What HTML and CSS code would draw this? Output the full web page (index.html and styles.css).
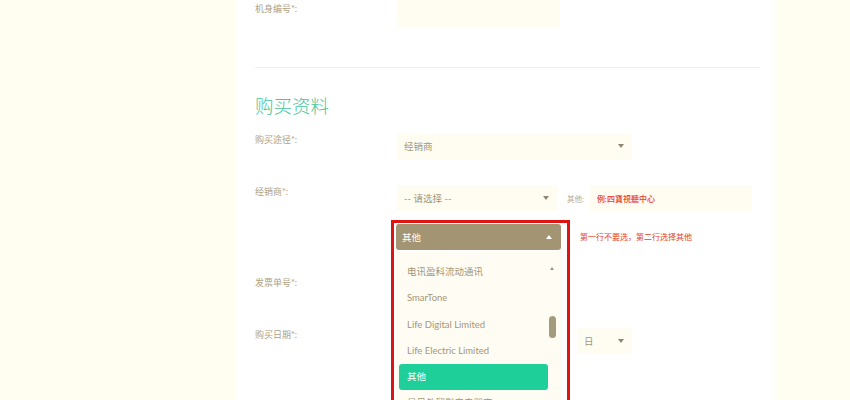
FILE: index.html
```html
<!DOCTYPE html>
<html lang="zh-CN">
<head>
<meta charset="utf-8">
<title>购买资料</title>
<link rel="stylesheet" href="styles.css">
</head>
<body>
<div class="panel">
  <div class="row row-first">
    <div class="label">机身编号*:</div>
    <div class="field"><div class="input w-serial"></div></div>
  </div>

  <hr class="divider">

  <h2 class="heading">购买资料</h2>

  <div class="row">
    <div class="label">购买途径*:</div>
    <div class="field">
      <div class="select w-channel"><span>经销商</span><i class="caret"></i></div>
    </div>
  </div>

  <div class="row">
    <div class="label">经销商*:</div>
    <div class="field">
      <div class="line">
        <div class="select w-dealer"><span>-- 请选择 --</span><i class="caret"></i></div>
        <span class="other-label">其他:</span>
        <div class="input w-other"><span class="placeholder">例:四寶視聽中心</span></div>
      </div>
      <div class="line line-open">
        <div class="open-wrap">
          <div class="select-open"><span>其他</span><i class="caret-up"></i></div>
          <div class="list">
            <ul class="items">
              <li>电讯盈科流动通讯</li>
              <li>SmarTone</li>
              <li>Life Digital Limited</li>
              <li>Life Electric Limited</li>
              <li class="active">其他</li>
              <li>易贝外贸影音电器商</li>
            </ul>
            <div class="scroll">
              <i class="scroll-up"></i>
              <i class="thumb"></i>
            </div>
          </div>
          <div class="mark"></div>
        </div>
        <span class="note">第一行不要选，第二行选择其他</span>
      </div>
    </div>
  </div>

  <div class="row">
    <div class="label">发票单号*:</div>
    <div class="field"><div class="input w-dealer"></div></div>
  </div>

  <div class="row">
    <div class="label">购买日期*:</div>
    <div class="field">
      <div class="line date">
        <div class="select w-year"><i class="caret"></i></div>
        <div class="select w-month"><i class="caret"></i></div>
        <div class="select w-day"><span>日</span><i class="caret"></i></div>
      </div>
    </div>
  </div>
</div>
</body>
</html>
```

FILE: styles.css
```css
* { box-sizing: border-box; }

html, body {
  margin: 0;
  padding: 0;
  height: 400px;
  overflow: hidden;
  background: #fffef1;
  font-family: "Lato", "Noto Sans CJK SC", sans-serif;
  font-size: 9.5px;
  color: #a39679;
}

.panel {
  margin-left: 235px;
  width: 540px;
  height: 400px;
  background: #ffffff;
  padding: 0 15px 0 20px;
}

.row {
  display: grid;
  grid-template-columns: 142px 1fr;
  margin-bottom: 26px;
}

.row-first { margin-bottom: 0; }
.row-first .label { padding-top: 3px; }

.label {
  padding-top: 1px;
  line-height: 12px;
  font-size: 9px;
  color: #aea287;
}

.field {
  display: flex;
  flex-direction: column;
  gap: 13px;
}

.line {
  display: flex;
  align-items: center;
}

.input, .select {
  height: 26px;
  background: #fffdf2;
  display: flex;
  align-items: center;
  padding: 0 8px 0 7px;
  justify-content: space-between;
  color: #a39679;
}

.w-serial { width: 163px; height: 27px; }
.w-channel { width: 235px; }
.w-dealer { width: 160px; }
.w-other { width: 162px; }

.caret {
  width: 0;
  height: 0;
  margin-left: auto;
  border-left: 3.5px solid transparent;
  border-right: 3.5px solid transparent;
  border-top: 4px solid #8f8570;
}

.divider {
  margin: 40px 0 0;
  border: 0;
  height: 1px;
  background: #f1efe4;
}

.heading {
  margin: 24px 0 13px;
  font-size: 18.5px;
  line-height: 28px;
  font-weight: 300;
  color: #45c69b;
}

.other-label {
  margin: 0 6px 0 10px;
  font-size: 7.5px;
  color: #b5aa90;
}

.placeholder {
  font-size: 8px;
  color: #e8401c;
  font-weight: 500;
}

.line-open {
  align-items: flex-start;
}

.open-wrap {
  position: relative;
  width: 165px;
  margin-left: -1px;
}

.select-open {
  height: 26px;
  border-radius: 3px;
  background: #a39474;
  color: #ffffff;
  display: flex;
  align-items: center;
  justify-content: space-between;
  padding: 0 9px 0 6px;
}

.caret-up {
  width: 0;
  height: 0;
  border-left: 3.5px solid transparent;
  border-right: 3.5px solid transparent;
  border-bottom: 4px solid #ffffff;
}

.list {
  position: absolute;
  z-index: 2;
  left: 0;
  top: 27px;
  width: 165px;
  height: 180px;
  background: #fffdf3;
  display: flex;
  padding: 8px 4px 0 3px;
}

.items {
  list-style: none;
  margin: 0;
  padding: 0;
  flex: 1;
}

.items li {
  height: 26.25px;
  line-height: 26.25px;
  padding-left: 8px;
  color: #a39679;
  border-radius: 3px;
  white-space: nowrap;
  overflow: hidden;
}

.items li.active {
  background: #1fcf9a;
  color: #ffffff;
}

.scroll {
  width: 9px;
  position: relative;
}

.scroll-up {
  position: absolute;
  left: 2px;
  top: 8px;
  width: 0;
  height: 0;
  border-left: 2.5px solid transparent;
  border-right: 2.5px solid transparent;
  border-bottom: 3px solid #9c9380;
}

.thumb {
  position: absolute;
  left: 1px;
  top: 57px;
  width: 7px;
  height: 22px;
  border-radius: 4px;
  background: #a39b7c;
}

.mark {
  position: absolute;
  z-index: 3;
  left: -5px;
  top: -4px;
  width: 179px;
  height: 220px;
  border: 3px solid #e01313;
  pointer-events: none;
}

.note {
  margin-left: 19px;
  margin-top: 7px;
  font-size: 8px;
  color: #e8401c;
}

.date { gap: 5px; }
.w-year { width: 80px; }
.w-month { width: 75px; }
.w-day { width: 55px; margin-left: 15px; padding-right: 8px; }
```
